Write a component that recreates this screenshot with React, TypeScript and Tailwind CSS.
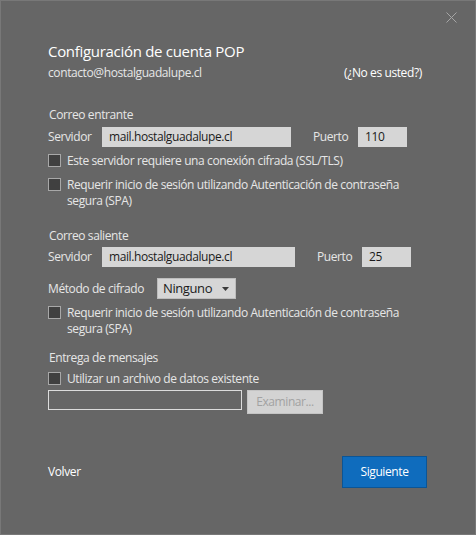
import React from "react";

const font = "font-['Segoe_UI','Open_Sans','Noto_Sans',sans-serif]";

function Check({ children }: { children: React.ReactNode }) {
  return (
    <div className="flex items-start gap-[6px]">
      <span className="mt-[1px] h-[13px] w-[13px] shrink-0 border border-[#a8a8a8] bg-[#404040]" />
      <span className="leading-[16px]">{children}</span>
    </div>
  );
}

function Field({ value, className }: { value: string; className: string }) {
  return (
    <div className={`flex h-[20px] items-center bg-[#d6d6d6] pl-[7px] text-[#1b1b1b] ${className}`}>
      {value}
    </div>
  );
}

export default function App() {
  return (
    <div
      className={`flex h-[535px] w-[476px] flex-col border border-[#787878] bg-[#666666] text-[12px] tracking-[-0.4px] text-[#e6e6e6] ${font}`}
    >
      <div className="flex h-[31px] items-center justify-end pr-[18px]">
        <svg width="11" height="11" viewBox="0 0 11 11" className="mt-[1px]">
          <path d="M0.5 0.5 L10.5 10.5 M10.5 0.5 L0.5 10.5" stroke="#a6a6a6" strokeWidth="1" />
        </svg>
      </div>

      <div className="px-[47px]">
        <h1 className="mt-[8px] h-[22px] text-[15px] leading-[22px] tracking-[-0.3px] text-white">
          Configuración de cuenta POP
        </h1>
        <div className="mt-[3px] flex h-[16px] items-center leading-[16px]">
          <span className="w-[296px]">contacto@hostalguadalupe.cl</span>
          <span className="text-white">(¿No es usted?)</span>
        </div>

        <div className="mt-[26px] h-[16px] pl-[1px] leading-[16px]">Correo entrante</div>
        <div className="mt-[4px] flex h-[20px] items-center">
          <span className="w-[54px]">Servidor</span>
          <Field value="mail.hostalguadalupe.cl" className="w-[189px]" />
          <span className="ml-[22px] w-[45px]">Puerto</span>
          <Field value="110" className="w-[49px]" />
        </div>
        <div className="mt-[6px]">
          <Check>Este servidor requiere una conexión cifrada (SSL/TLS)</Check>
        </div>
        <div className="mt-[8px]">
          <Check>
            Requerir inicio de sesión utilizando Autenticación de contraseña
            <br />
            segura (SPA)
          </Check>
        </div>

        <div className="mt-[19px] h-[16px] pl-[1px] leading-[16px]">Correo saliente</div>
        <div className="mt-[3px] flex h-[20px] items-center">
          <span className="w-[54px]">Servidor</span>
          <Field value="mail.hostalguadalupe.cl" className="w-[193px]" />
          <span className="ml-[22px] w-[45px]">Puerto</span>
          <Field value="25" className="w-[49px]" />
        </div>
        <div className="mt-[11px] flex h-[21px] items-center">
          <span className="w-[109px]">Método de cifrado</span>
          <div className="flex h-[21px] w-[79px] items-center justify-between border border-[#bdbdbd] bg-[#d6d6d6] pl-[5px] pr-[6px] text-[13px] text-[#1b1b1b]">
            <span>Ninguno</span>
            <svg width="7" height="4" viewBox="0 0 7 4">
              <path d="M0 0 H7 L3.5 4 Z" fill="#3a3a3a" />
            </svg>
          </div>
        </div>
        <div className="mt-[6px]">
          <Check>
            Requerir inicio de sesión utilizando Autenticación de contraseña
            <br />
            segura (SPA)
          </Check>
        </div>

        <div className="mt-[13px] h-[16px] pl-[1px] leading-[16px]">Entrega de mensajes</div>
        <div className="mt-[5px]">
          <Check>Utilizar un archivo de datos existente</Check>
        </div>
        <div className="mt-[3px] flex items-start gap-[5px]">
          <div className="h-[20px] w-[194px] border border-[#dcdcdc]" />
          <div className="flex h-[24px] w-[76px] items-center justify-center border border-[#c4c4c4] bg-[#d3d3d3] text-[#a2a2a2]">
            Examinar...
          </div>
        </div>

        <div className="mt-[42px] flex items-center justify-between pr-[1px]">
          <span className="text-white">Volver</span>
          <button className="h-[32px] w-[85px] border border-[#0b5596] bg-[#0f6cbd] text-white">
            Siguiente
          </button>
        </div>
      </div>
    </div>
  );
}
